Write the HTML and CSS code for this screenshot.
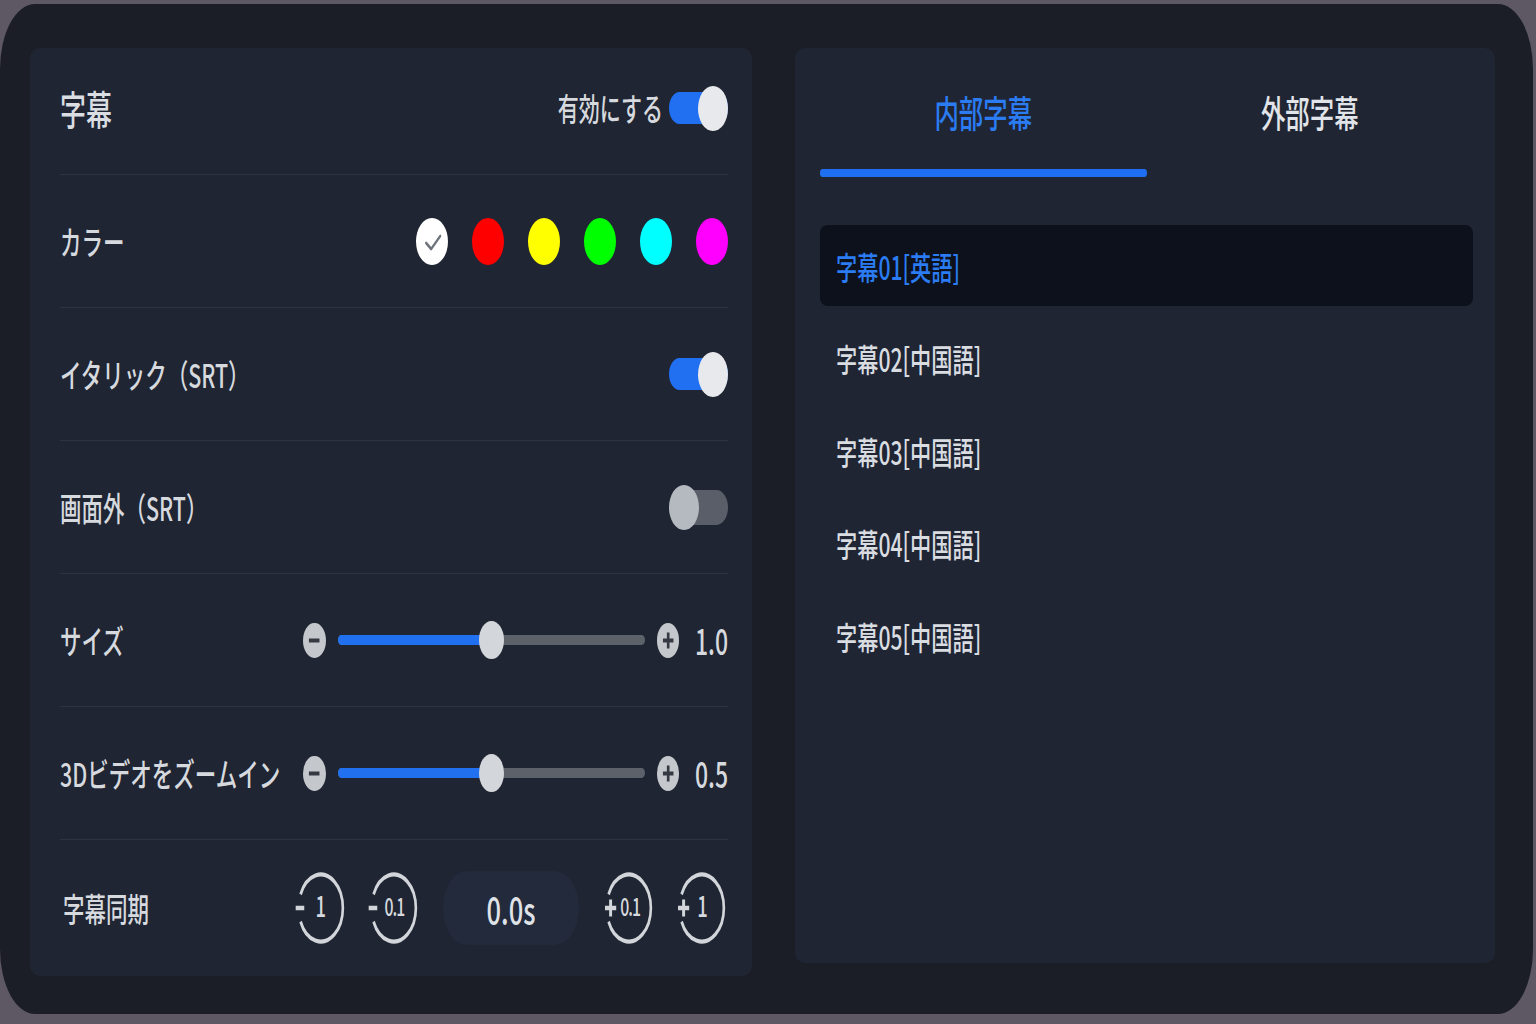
FILE: index.html
```html
<!DOCTYPE html>
<html lang="ja">
<head>
<meta charset="utf-8">
<title>字幕設定</title>
<link rel="stylesheet" href="styles.css">
</head>
<body>
<div class="device">
  <section class="panel settings">
    <div class="row row-head">
      <span class="tx title">字幕</span>
      <div class="enable">
        <span class="tx enable-text">有効にする</span>
        <span class="switch on"><span class="knob"></span></span>
      </div>
    </div>

    <div class="row">
      <span class="tx label">カラー</span>
      <div class="swatches">
        <span class="swatch white">
          <svg viewBox="0 0 47 47" preserveAspectRatio="none"><path class="check" d="M15 25 L22.5 31 L36 18"/></svg>
        </span>
        <span class="swatch red"></span>
        <span class="swatch yellow"></span>
        <span class="swatch green"></span>
        <span class="swatch cyan"></span>
        <span class="swatch magenta"></span>
      </div>
    </div>

    <div class="row">
      <span class="tx label">イタリック（SRT）</span>
      <span class="switch on"><span class="knob"></span></span>
    </div>

    <div class="row">
      <span class="tx label">画面外（SRT）</span>
      <span class="switch off"><span class="knob"></span></span>
    </div>

    <div class="row">
      <span class="tx label">サイズ</span>
      <div class="slider">
        <span class="step"><svg viewBox="0 0 34 35" preserveAspectRatio="none"><path d="M9 17.5H25"/></svg></span>
        <span class="track"><span class="fill" style="width:50%"></span><span class="thumb"></span></span>
        <span class="step"><svg viewBox="0 0 34 35" preserveAspectRatio="none"><path d="M9 17.5H25M17 9.5V25.5"/></svg></span>
        <span class="tx value">1.0</span>
      </div>
    </div>

    <div class="row">
      <span class="tx label">3Dビデオをズームイン</span>
      <div class="slider">
        <span class="step"><svg viewBox="0 0 34 35" preserveAspectRatio="none"><path d="M9 17.5H25"/></svg></span>
        <span class="track"><span class="fill" style="width:50%"></span><span class="thumb"></span></span>
        <span class="step"><svg viewBox="0 0 34 35" preserveAspectRatio="none"><path d="M9 17.5H25M17 9.5V25.5"/></svg></span>
        <span class="tx value">0.5</span>
      </div>
    </div>

    <div class="row">
      <span class="tx label sync-label">字幕同期</span>
      <div class="sync">
        <svg class="nudge" viewBox="0 0 72 72" preserveAspectRatio="none">
          <path class="ring" d="M5.4 22.4 A33.5 33.5 0 1 1 5.4 49.6"/>
          <path class="sign" d="M-2 36H11"/>
          <text class="n-big" x="36" y="45.5">1</text>
        </svg>
        <svg class="nudge" viewBox="0 0 72 72" preserveAspectRatio="none">
          <path class="ring" d="M5.4 22.4 A33.5 33.5 0 1 1 5.4 49.6"/>
          <path class="sign" d="M-2 36H11"/>
          <text class="n-small" x="37" y="44.5">0.1</text>
        </svg>
        <span class="readout"><span class="tx">0.0s</span></span>
        <svg class="nudge" viewBox="0 0 72 72" preserveAspectRatio="none">
          <path class="ring" d="M5.4 22.4 A33.5 33.5 0 1 1 5.4 49.6"/>
          <path class="sign" d="M0 36H17M8.5 27.5V44.5"/>
          <text class="n-small" x="38" y="44.5">0.1</text>
        </svg>
        <svg class="nudge" viewBox="0 0 72 72" preserveAspectRatio="none">
          <path class="ring" d="M5.4 22.4 A33.5 33.5 0 1 1 5.4 49.6"/>
          <path class="sign" d="M0 36H17M8.5 27.5V44.5"/>
          <text class="n-big" x="37" y="45.5">1</text>
        </svg>
      </div>
    </div>
  </section>

  <section class="panel tracks">
    <div class="tabs">
      <div class="tab active"><span class="tx tab-label">内部字幕</span><span class="tab-bar"></span></div>
      <div class="tab"><span class="tx tab-label">外部字幕</span><span class="tab-bar"></span></div>
    </div>
    <div class="list">
      <div class="item current"><span class="tx">字幕01[英語]</span></div>
      <div class="item"><span class="tx">字幕02[中国語]</span></div>
      <div class="item"><span class="tx">字幕03[中国語]</span></div>
      <div class="item"><span class="tx">字幕04[中国語]</span></div>
      <div class="item"><span class="tx">字幕05[中国語]</span></div>
    </div>
  </section>
</div>
</body>
</html>
```

FILE: styles.css
```css
html, body {
  margin: 0;
  height: 100%;
  overflow: hidden;
}

body {
  background: #5d5864;
  font-family: "Noto Sans CJK JP", "Noto Sans", sans-serif;
  font-weight: 500;
  line-height: 1;
}

.tx {
  display: inline-block;
  white-space: nowrap;
  transform: scaleY(1.515);
}

.device {
  margin-top: 4px;
  width: 1533px;
  height: 1010px;
  box-sizing: border-box;
  padding: 44px 0 0 30px;
  background: #1b1e27;
  border-radius: 35px / 65px;
  display: flex;
  align-items: flex-start;
  gap: 43px;
}

.panel {
  background: #1f2532;
  border-radius: 10px;
  box-sizing: border-box;
  flex: none;
}

/* ---------- settings column ---------- */
.settings {
  width: 722px;
  height: 928px;
  padding: 0 24px 0 30px;
  display: flex;
  flex-direction: column;
}

.row {
  height: 133px;
  flex: none;
  box-sizing: border-box;
  border-bottom: 1px solid #2c3341;
  display: flex;
  align-items: center;
  justify-content: space-between;
}

.row-head {
  height: 127px;
  padding-bottom: 6px;
}

.row:last-child {
  border-bottom: none;
  flex: 1;
}

.label {
  font-size: 21.5px;
  color: #d6d9de;
}

.sync-label {
  margin-left: 3px;
}

.title {
  font-size: 26px;
  color: #dadde2;
}

.enable {
  display: flex;
  align-items: center;
  gap: 6px;
}

.enable-text {
  font-size: 21px;
  color: #d6d9de;
}

/* toggle switch */
.switch {
  width: 59px;
  height: 32px;
  border-radius: 10.5px / 16px;
  background: #2170f2;
  display: flex;
  align-items: center;
  justify-content: flex-end;
  flex: none;
}

.switch.off {
  height: 35px;
  border-radius: 11.5px / 17.5px;
  background: #595e68;
  justify-content: flex-start;
}

.knob {
  width: 29.7px;
  height: 45px;
  border-radius: 50%;
  background: #e8e9ec;
  flex: none;
}

.switch.off .knob {
  background: #b5b9c0;
}

/* colour swatches */
.swatches {
  display: flex;
  gap: 24.4px;
}

.swatch {
  width: 31.7px;
  height: 47px;
  border-radius: 50%;
  display: block;
}

.swatch svg {
  width: 31.7px;
  height: 47px;
  display: block;
}

.check {
  fill: none;
  stroke: #6e727b;
  stroke-width: 3;
  stroke-linecap: round;
  stroke-linejoin: round;
}

.white { background: #ffffff; }
.red { background: #ff0000; }
.yellow { background: #ffff00; }
.green { background: #00ff00; }
.cyan { background: #00ffff; }
.magenta { background: #ff00ff; }

/* sliders */
.slider {
  display: flex;
  align-items: center;
}

.step {
  width: 22.4px;
  height: 35px;
  border-radius: 50%;
  background: #c4c7cc;
  flex: none;
}

.step svg {
  width: 22.4px;
  height: 35px;
  display: block;
}

.step path {
  stroke: #343942;
  stroke-width: 4;
  fill: none;
}

.track {
  width: 307px;
  height: 10px;
  margin: 0 12px;
  border-radius: 3.3px / 5px;
  background: #5c616a;
  display: flex;
  align-items: center;
  flex: none;
}

.fill {
  height: 100%;
  background: #2170f0;
  border-radius: 3.3px 0 0 3.3px / 5px 0 0 5px;
}

.thumb {
  width: 25px;
  height: 38px;
  margin-left: -12.5px;
  border-radius: 50%;
  background: #d3d6da;
  flex: none;
}

.value {
  margin-left: 16px;
  font-size: 23px;
  color: #d6d9de;
}

/* subtitle sync */
.sync {
  display: flex;
  align-items: center;
  gap: 25.5px;
  margin-right: 3px;
}

.nudge {
  width: 47.5px;
  height: 72px;
  display: block;
  overflow: visible;
  flex: none;
}

.ring,
.sign {
  fill: none;
  stroke: #d2d5da;
  stroke-width: 4;
}

.sign {
  stroke-width: 4.5;
}

.nudge text {
  fill: #d6d9de;
  text-anchor: middle;
  font-family: "Noto Sans CJK JP", "Noto Sans", sans-serif;
  font-weight: 500;
}

.n-big { font-size: 28px; }
.n-small { font-size: 24px; letter-spacing: -1.5px; }

.readout {
  width: 136px;
  height: 74px;
  border-radius: 24.4px / 37px;
  background: #232a3c;
  display: flex;
  align-items: center;
  justify-content: center;
  font-size: 25.5px;
  color: #dfe2e7;
  flex: none;
}

/* ---------- track list column ---------- */
.tracks {
  width: 700px;
  height: 915px;
  padding: 0 22px 0 25px;
}

.tabs {
  display: flex;
}

.tab {
  flex: 1;
  display: flex;
  flex-direction: column;
  align-items: center;
  padding-top: 46px;
  font-size: 24.4px;
  color: #e1e4e9;
}

.tab-label {
  height: 37px;
  line-height: 37px;
}

.tab-bar {
  align-self: stretch;
  height: 8px;
  margin-top: 38px;
  border-radius: 2.6px / 4px;
}

.tab.active {
  color: #2b7cf3;
}

.tab.active .tab-bar {
  background: #1f6ff2;
}

.list {
  margin-top: 48px;
  display: flex;
  flex-direction: column;
  gap: 11.5px;
}

.item {
  height: 81px;
  padding-left: 16px;
  border-radius: 8px;
  display: flex;
  align-items: center;
  font-size: 21.2px;
  color: #d9dce1;
}

.item.current {
  background: #0c111b;
  color: #2b7cf2;
}
```
